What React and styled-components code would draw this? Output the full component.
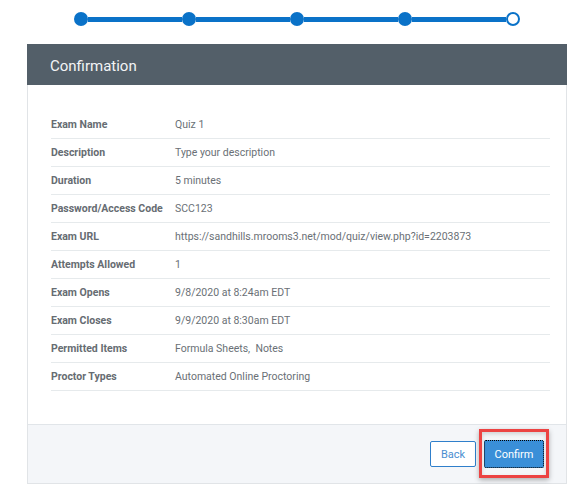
import React from "react";
import styled, { createGlobalStyle } from "styled-components";

const GlobalStyle = createGlobalStyle`
  body {
    margin: 0;
    background: #fff;
    font-family: Roboto, "Liberation Sans", Arial, sans-serif;
  }
`;

const rows = [
  ["Exam Name", "Quiz 1"],
  ["Description", "Type your description"],
  ["Duration", "5 minutes"],
  ["Password/Access Code", "SCC123"],
  ["Exam URL", "https://sandhills.mrooms3.net/mod/quiz/view.php?id=2203873"],
  ["Attempts Allowed", "1"],
  ["Exam Opens", "9/8/2020 at 8:24am EDT"],
  ["Exam Closes", "9/9/2020 at 8:30am EDT"],
  ["Permitted Items", "Formula Sheets,  Notes"],
  ["Proctor Types", "Automated Online Proctoring"]
];

const Page = styled.div`
  width: 540px;
  padding: 12px 0 0 27px;
`;

const Stepper = styled.div`
  display: flex;
  align-items: center;
  justify-content: center;
  height: 14px;
`;

const Dot = styled.div`
  width: 14px;
  height: 14px;
  box-sizing: border-box;
  border-radius: 50%;
  flex-shrink: 0;
  background: ${(props) => (props.open ? "#fff" : "#0a72c8")};
  border: ${(props) => (props.open ? "2.5px solid #0a72c8" : "none")};
`;

const Bar = styled.div`
  width: 94px;
  height: 5px;
  background: #0a72c8;
`;

const Card = styled.div`
  margin-top: 18px;
  border: 1px solid #e1e4e7;
  border-top: none;
`;

const Header = styled.div`
  height: 41px;
  background: #535f69;
  margin: 0 -1px;
  display: flex;
  align-items: center;
  padding: 3px 0 0 23px;
  box-sizing: border-box;
  color: #f2f4f5;
  font-size: 15px;
`;

const Body = styled.div`
  padding: 26px 16px 33px 23px;
`;

const Row = styled.div`
  display: grid;
  grid-template-columns: 124px 1fr;
  align-items: center;
  height: 28px;
  border-bottom: 1px solid #e6eaec;
  box-sizing: border-box;
  font-size: 10.5px;
`;

const Label = styled.div`
  font-weight: 700;
  color: #666c72;
`;

const Value = styled.div`
  color: #6a7076;
  white-space: pre;
`;

const Footer = styled.div`
  height: 58px;
  background: #f4f6f9;
  border-top: 1px solid #e1e5e9;
  display: flex;
  align-items: center;
  justify-content: flex-end;
  gap: 8px;
  padding-right: 22px;
`;

const Button = styled.button`
  width: ${(props) => (props.primary ? "60px" : "46px")};
  height: ${(props) => (props.primary ? "28px" : "26px")};
  padding: 0;
  font-family: Roboto, "Liberation Sans", Arial, sans-serif;
  font-size: 11px;
  border-radius: 2px;
  cursor: pointer;
  border: 1px solid ${(props) => (props.primary ? "#3a8fd8" : "#2f7fcb")};
  background: ${(props) => (props.primary ? "#3a8fd8" : "#fff")};
  color: ${(props) => (props.primary ? "#fff" : "#4a8ed0")};
  outline: ${(props) => (props.primary ? "1px dotted #000" : "none")};
  outline-offset: -1px;
`;

const Highlight = styled.div`
  position: relative;
  display: flex;
  &::after {
    content: "";
    position: absolute;
    left: -5px;
    right: -5px;
    top: -11px;
    bottom: -10px;
    border: 3px solid #ec4343;
    box-shadow: 0 2px 5px rgba(0, 0, 0, 0.3), inset 0 2px 4px rgba(0, 0, 0, 0.15);
    pointer-events: none;
  }
`;

export default function App() {
  return (
    <Page>
      <GlobalStyle />
      <Stepper>
        <Dot />
        <Bar />
        <Dot />
        <Bar />
        <Dot />
        <Bar />
        <Dot />
        <Bar />
        <Dot open />
      </Stepper>
      <Card>
        <Header>Confirmation</Header>
        <Body>
          {rows.map(([label, value]) => (
            <Row key={label}>
              <Label>{label}</Label>
              <Value>{value}</Value>
            </Row>
          ))}
        </Body>
        <Footer>
          <Button>Back</Button>
          <Highlight>
            <Button primary>Confirm</Button>
          </Highlight>
        </Footer>
      </Card>
    </Page>
  );
}
